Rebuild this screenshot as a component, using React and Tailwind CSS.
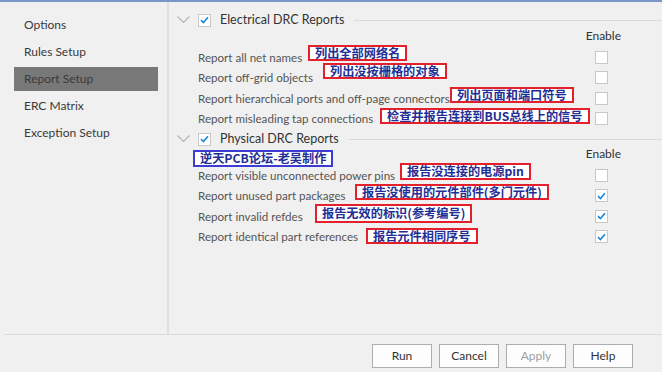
import React from "react";

const FONT = { fontFamily: "Lato, 'Liberation Sans', sans-serif" };
const CJK = { fontFamily: "'Noto Sans CJK SC', 'Noto Sans', sans-serif" };

const menu = ["Options", "Rules Setup", "Report Setup", "ERC Matrix", "Exception Setup"];

const electrical = [
  { label: "Report all net names", on: false },
  { label: "Report off-grid objects", on: false },
  { label: "Report hierarchical ports and off-page connectors", on: false },
  { label: "Report misleading tap connections", on: false },
];

const physical = [
  { label: "Report visible unconnected power pins", on: false },
  { label: "Report unused part packages", on: true },
  { label: "Report invalid refdes", on: true },
  { label: "Report identical part references", on: true },
];

// 截图上的红框注释 (overlay)
const notes = [
  { text: "列出全部网络名", cls: "left-[139px] top-[43px] h-[16px]" },
  { text: "列出没按栅格的对象", cls: "left-[154px] top-[61px] h-[16px]" },
  { text: "列出页面和端口符号", cls: "left-[281px] top-[85px] h-[16px]" },
  { text: "检查并报告连接到BUS总线上的信号", cls: "left-[211px] top-[106px] h-[16px]" },
  { text: "报告没连接的电源pin", cls: "left-[231px] top-[161px] h-[17px]" },
  { text: "报告没使用的元件部件(多门元件)", cls: "left-[186px] top-[182px] h-[16px]" },
  { text: "报告无效的标识(参考编号)", cls: "left-[146px] top-[202px] h-[19px]" },
  { text: "报告元件相同序号", cls: "left-[197px] top-[226px] h-[16px]" },
];

const Check = ({ on }) => (
  <div className="w-[13px] h-[13px] bg-white border border-[#c8c8c8] flex items-center justify-center">
    {on && (
      <svg width="9" height="8" viewBox="0 0 9 8">
        <path d="M1 4.2 L3.4 6.5 L8 1.2" fill="none" stroke="#1a86d8" strokeWidth="1.6" />
      </svg>
    )}
  </div>
);

const Header = ({ title }) => (
  <div className="flex items-center h-[18px]">
    <svg width="13" height="8" viewBox="0 0 13 8" className="ml-[8px]">
      <path d="M0.5 0.5 L6.5 6.5 L12.5 0.5" fill="none" stroke="#b4b4b4" strokeWidth="1.2" />
    </svg>
    <div className="ml-[8px]">
      <Check on />
    </div>
    <span className="ml-[9px] text-[12.5px] text-[#333]">{title}</span>
    <div className="flex-1 h-px bg-[#d9d9d9] ml-[10px]"></div>
  </div>
);

const Row = ({ label, on }) => (
  <div className="flex items-center h-[20.5px] pl-[29px]">
    <span className="flex-1 text-[11.6px] text-[#555]">{label}</span>
    <div className="mr-[54px]">
      <Check on={on} />
    </div>
  </div>
);

const Btn = ({ children, disabled }) => (
  <button
    className={
      "w-[60px] h-[24px] bg-[#fdfdfd] border border-[#adadad] text-[12px] " +
      (disabled ? "text-[#a0a0a0]" : "text-[#333]")
    }
  >
    {children}
  </button>
);

export default function App() {
  return (
    <div className="w-[662px] h-[372px] bg-[#f0f0f0] border-t-2 border-[#7a96c8] overflow-hidden" style={FONT}>
      <div className="flex h-[332px]">
        {/* sidebar */}
        <div className="w-[169px] border-r-2 border-[#dedede] pt-[11px] flex flex-col gap-[3px]">
          {menu.map((m) => (
            <div
              key={m}
              className={
                "h-[24px] mx-[14px] w-[144px] px-[10px] flex items-center text-[12px] text-[#3a3a3a] " +
                (m === "Report Setup" ? "bg-[#787878] text-[#1e1e1e]" : "")
              }
            >
              {m}
            </div>
          ))}
        </div>

        {/* content */}
        <div className="flex-1 relative pt-[9px]">
          <Header title="Electrical DRC Reports" />
          <div className="h-[12px] mt-px flex justify-end pr-[41px] items-center text-[12px] text-[#333]">
            Enable
          </div>
          <div className="mt-[5px]">
            {electrical.map((r) => (
              <Row key={r.label} {...r} />
            ))}
          </div>
          <div className="mt-[1px]">
            <Header title="Physical DRC Reports" />
          </div>
          <div className="h-[12px] flex justify-end pr-[41px] items-center text-[12px] text-[#333]">
            Enable
          </div>
          <div className="mt-[5px]">
            {physical.map((r) => (
              <Row key={r.label} {...r} />
            ))}
          </div>

          {notes.map((n) => (
            <div
              key={n.text}
              className={
                "absolute flex items-center bg-white border-2 border-[#e3202b] px-[5px] text-[12.2px] font-bold text-[#1f2f96] whitespace-nowrap leading-none " +
                n.cls
              }
              style={CJK}
            >
              {n.text}
            </div>
          ))}
          <div
            className="absolute left-[24px] top-[148px] h-[17px] flex items-center bg-white border-2 border-[#3c3cd2] px-[5px] text-[12.2px] font-bold text-[#1f2f96] whitespace-nowrap leading-none"
            style={CJK}
          >
            逆天PCB论坛-老吴制作
          </div>
        </div>
      </div>

      {/* footer */}
      <div className="ml-1 border-t border-[#dcdcdc] pt-[9px] flex justify-end gap-[7px] pr-[29px]">
        <Btn>Run</Btn>
        <Btn>Cancel</Btn>
        <Btn disabled>Apply</Btn>
        <Btn>Help</Btn>
      </div>
    </div>
  );
}
